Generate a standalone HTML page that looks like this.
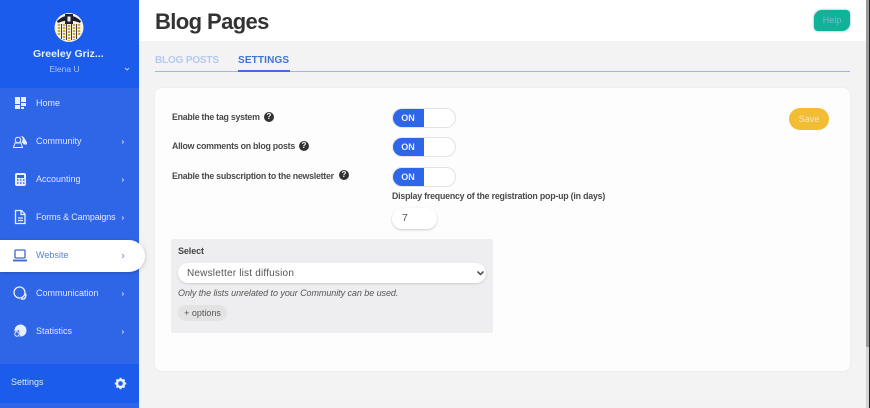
<!DOCTYPE html>
<html><head><meta charset="utf-8">
<style>
*{box-sizing:border-box}
html,body{margin:0;padding:0}
body{width:870px;height:408px;overflow:hidden;position:relative;background:#f3f3f4;font-family:"Liberation Sans",sans-serif}
#w{position:absolute;left:0;top:0;width:870px;height:408px;filter:blur(.35px)}
.a{position:absolute;white-space:nowrap}
#side{left:0;top:0;width:139px;height:408px;background:#2f66e8}
#sidetop{left:0;top:0;width:139px;height:88px;background:#1b5cec}
#sidebot{left:0;top:364px;width:139px;height:39px;background:#1b5cec}
.nav{left:36px;font-size:9px;line-height:12px;color:#dfe7fb;letter-spacing:0}
.chev{left:120px;width:6px;height:8px}
.ico{left:12px;width:16px;height:16px}
.lab{left:172px;font-size:8.800px;font-weight:bold;color:#4a4a4a;line-height:12px;letter-spacing:-.25px}
.q{width:10px;height:10px;border-radius:50%;background:#333;color:#fff;font-size:8px;font-weight:bold;line-height:10px;text-align:center}
.tog{left:392px;width:64px;height:20px;border-radius:10px;background:#fff;border:1px solid #e3e3e6;overflow:hidden}
.tog b{position:absolute;left:-1px;top:-1px;width:32px;height:20px;background:#2e66ea;color:#e8eefc;font-size:9px;line-height:20px;text-align:center;border-radius:10px 0 0 10px}
</style></head><body><div id="w">
<div class="a" style="left:139px;top:0;width:731px;height:41px;background:#fff"></div>
<div class="a" id="side"></div><div class="a" id="sidetop"></div><div class="a" id="sidebot"></div>

<svg class="a" style="left:54px;top:12px" width="30" height="31" viewBox="0 0 30 31">
<circle cx="15" cy="15.500" r="14.500" fill="#f6f3e8"/>
<path d="M3 9Q15 -2 27 9L26 11Q15 6 4 11Z" fill="#1c1c2c"/>
<path d="M11 2h8v10h-8z" fill="#20202e"/><path d="M13.500 4.500h3v5h-3z" fill="#eee"/>
<g stroke="#d3a92f" stroke-width="2.400" stroke-dasharray="2 1"><path d="M5 12v12M10 12v16M15 13v16M20 12v16M25 12v12"/></g>
<g stroke="#2c2c3c" stroke-width=".9"><path d="M7.500 12v15M12.500 12v16M17.500 12v16M22.500 12v15"/></g>
</svg>
<div class="a" style="left:33px;top:47px;font-size:10.500px;line-height:14px;font-weight:bold;color:#e9effd">Greeley Griz...</div>
<div class="a" style="left:0;width:129px;top:63px;text-align:center;font-size:8.500px;line-height:12px;color:#a9c2f8">Elena U</div>
<svg class="a" style="left:124px;top:67px" width="6" height="5"><path d="M1 1l2 2 2-2" fill="none" stroke="#b7ccf8" stroke-width="1"/></svg>

<div class="a nav" style="top:97px">Home</div>
<div class="a nav" style="top:135px">Community</div>
<div class="a nav" style="top:173px">Accounting</div>
<div class="a nav" style="top:211px;letter-spacing:-.15px">Forms &amp; Campaigns</div>
<div class="a" style="left:0;top:240px;width:145px;height:32px;background:#fff;border-radius:0 16px 16px 0;box-shadow:0 1px 4px rgba(0,0,0,.22)"></div>
<div class="a nav" style="top:249px;color:#5a7fd8">Website</div>
<div class="a nav" style="top:287px">Communication</div>
<div class="a nav" style="top:325px">Statistics</div>
<div class="a" style="left:11px;top:376px;font-size:9px;line-height:13px;color:#dfe7fb">Settings</div>

<svg class="a ico" style="top:95px" viewBox="0 0 16 16" fill="#e8eefc"><rect x="3" y="2" width="5" height="7"/><rect x="9" y="2" width="5" height="5"/><rect x="3" y="10" width="5" height="4"/><rect x="9" y="8" width="5" height="3"/><rect x="9" y="12" width="3" height="2"/></svg>
<svg class="a ico" style="top:133px" viewBox="0 0 16 16" fill="none" stroke="#e8eefc" stroke-width="1"><circle cx="6" cy="7" r="2.800"/><path d="M1.500 14.500l1.500-4.500h6l1.500 4.500z"/><path d="M8 3.500a3 3 0 0 1 4 1l3 5v2h-3l-2.500-2.500a3.500 3.500 0 0 0-1.500-6z" fill="#e8eefc" stroke="none"/></svg>
<svg class="a ico" style="top:171px" viewBox="0 0 16 16"><rect x="3" y="2" width="11" height="13" rx="2" fill="#e8eefc"/><rect x="5" y="4" width="7" height="3" fill="#2f66e8"/><path d="M5 9h1.500M8 9h1.500M11 9h1.500M5 12h1.500M8 12h1.500M11 12h1.500" stroke="#2f66e8" stroke-width="1.500"/></svg>
<svg class="a ico" style="top:209px" viewBox="0 0 16 16" fill="none" stroke="#e8eefc" stroke-width="1.300"><path d="M3.500 1.500h6l3.500 3.500v9.500h-9.500z"/><path d="M9 1.500v4h4"/><path d="M6 9h5M6 11.500h5" stroke-width="1.200"/></svg>
<svg class="a ico" style="top:247px" viewBox="0 0 16 16" fill="none" stroke="#3c68cc" stroke-width="1.300"><rect x="3" y="3" width="10" height="8" rx="1"/><path d="M1 13.500h14" stroke-width="1.800"/></svg>
<svg class="a ico" style="top:285px" viewBox="0 0 16 16" fill="none" stroke="#e8eefc" stroke-width="1.300"><circle cx="7.500" cy="7.500" r="5.500"/><path d="M13.500 8.500a5 5 0 0 1 -1.500 5.500h-3" stroke-width="1.500"/></svg>
<svg class="a ico" style="top:323px" viewBox="0 0 16 16"><circle cx="8.500" cy="7.500" r="6" fill="#e8eefc"/><path d="M7 7l-5 2 2 5 4-1z" fill="#2f66e8"/><circle cx="5" cy="11" r="2.200" fill="none" stroke="#e8eefc" stroke-width="1"/></svg>
<svg class="a" style="left:114px;top:377px" width="13" height="13" viewBox="0 0 13 13"><circle cx="6.500" cy="6.500" r="3.500" fill="none" stroke="#eaf0fd" stroke-width="2.400"/><path d="M6.500 .8v2M6.500 10.200v2M.8 6.500h2M10.200 6.500h2M2.500 2.500l1.400 1.400M9.100 9.100l1.400 1.400M2.500 10.500l1.400-1.400M9.100 3.900l1.400-1.400" stroke="#eaf0fd" stroke-width="2"/></svg>

<svg class="a chev" style="top:138px" viewBox="0 0 6 8"><path d="M2 2.500L3.700 4 2 5.500" fill="none" stroke="#bcd0f8" stroke-width=".9"/></svg>
<svg class="a chev" style="top:176px" viewBox="0 0 6 8"><path d="M2 2.500L3.700 4 2 5.500" fill="none" stroke="#bcd0f8" stroke-width=".9"/></svg>
<svg class="a chev" style="top:214px" viewBox="0 0 6 8"><path d="M2 2.500L3.700 4 2 5.500" fill="none" stroke="#bcd0f8" stroke-width=".9"/></svg>
<svg class="a chev" style="top:252px" viewBox="0 0 6 8"><path d="M2 2L4 4 2 6" fill="none" stroke="#8aa3dc" stroke-width="1"/></svg>
<svg class="a chev" style="top:290px" viewBox="0 0 6 8"><path d="M2 2.500L3.700 4 2 5.500" fill="none" stroke="#bcd0f8" stroke-width=".9"/></svg>
<svg class="a chev" style="top:328px" viewBox="0 0 6 8"><path d="M2 2.500L3.700 4 2 5.500" fill="none" stroke="#bcd0f8" stroke-width=".9"/></svg>

<div class="a" style="left:155px;top:7px;font-size:22px;line-height:30px;font-weight:bold;color:#333;letter-spacing:-.6px">Blog Pages</div>
<div class="a" style="left:814px;top:10px;width:36px;height:21px;background:#0fb397;border-radius:8px 4px 8px 4px;box-shadow:0 0 2px rgba(60,90,200,.6);color:#8fb0d8;font-size:9px;line-height:20px;text-align:center">Help</div>

<div class="a" style="left:155px;top:54px;font-size:10px;line-height:13px;font-weight:bold;color:#b4c9f2;letter-spacing:-.17px">BLOG POSTS</div>
<div class="a" style="left:238px;top:54px;font-size:10px;line-height:13px;font-weight:bold;color:#4371d6;letter-spacing:.15px">SETTINGS</div>
<div class="a" style="left:155px;top:71px;width:695px;height:1px;background:#9fb5e8"></div>
<div class="a" style="left:238px;top:70px;width:52px;height:2px;background:#3f6fdc"></div>

<div class="a" style="left:155px;top:88px;width:695px;height:283px;background:#fdfdfd;border-radius:7px;box-shadow:0 0 2px rgba(0,0,0,.06)"></div>
<div class="a lab" style="top:111px">Enable the tag system</div>
<div class="a lab" style="top:140px">Allow comments on blog posts</div>
<div class="a lab" style="top:170px">Enable the subscription to the newsletter</div>
<div class="a q" style="left:264px;top:112px">?</div>
<div class="a q" style="left:299px;top:141px">?</div>
<div class="a q" style="left:339px;top:170px">?</div>
<div class="a tog" style="top:108px"><b>ON</b></div>
<div class="a tog" style="top:137px"><b>ON</b></div>
<div class="a tog" style="top:167px"><b>ON</b></div>
<div class="a lab" style="left:392px;top:190px;letter-spacing:-.2px">Display frequency of the registration pop-up (in days)</div>
<div class="a" style="left:392px;top:208px;width:45px;height:21px;background:#fff;border-radius:10px;box-shadow:0 1px 2px rgba(0,0,0,.2);font-size:10.500px;line-height:21px;padding-left:10px;color:#555">7</div>
<div class="a" style="left:789px;top:108px;width:40px;height:22px;background:#f2bd33;border-radius:11px;color:#f0e6cc;font-size:9px;line-height:22px;text-align:center">Save</div>

<div class="a" style="left:171px;top:239px;width:322px;height:94px;background:#eeeef0;border-radius:2px"></div>
<div class="a" style="left:178px;top:245px;font-size:9px;font-weight:bold;line-height:12px;color:#444;letter-spacing:-.1px">Select</div>
<div class="a" style="left:178px;top:263px;width:308px;height:20px;background:#fff;border-radius:10px;box-shadow:0 1px 2px rgba(0,0,0,.14);font-size:10px;line-height:21px;padding-left:9px;color:#555;letter-spacing:.2px">Newsletter list diffusion</div>
<svg class="a" style="left:476px;top:270px" width="9" height="6"><path d="M1.500 1.500l3 3 3-3" fill="none" stroke="#444" stroke-width="1.500"/></svg>
<div class="a" style="left:178px;top:287px;font-size:9px;font-style:italic;line-height:12px;color:#555;letter-spacing:-.06px">Only the lists unrelated to your Community can be used.</div>
<div class="a" style="left:178px;top:305px;width:49px;height:16px;background:#e3e3e3;border-radius:8px;font-size:9px;line-height:16px;text-align:center;color:#555">+ options</div>

<div class="a" style="left:866px;top:0;width:3px;height:347px;background:#9a9a9a"></div>
<div class="a" style="left:866px;top:347px;width:3px;height:61px;background:#d4d4d4"></div>
<div class="a" style="left:869px;top:0;width:1px;height:408px;background:#222"></div>
</div></body></html>
